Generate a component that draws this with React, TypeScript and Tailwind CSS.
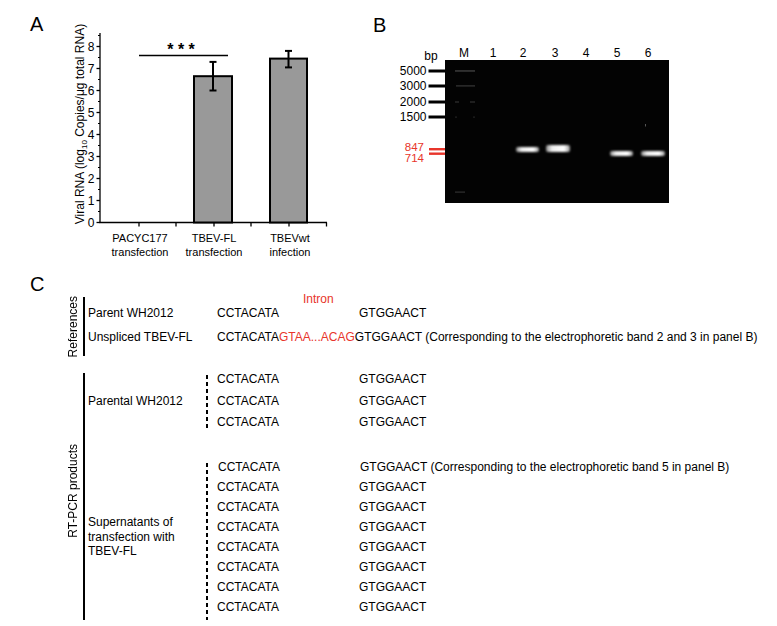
const Y0 = 222.5;
const UNIT = 22;
const yv = (v: number) => Y0 - v * UNIT;

const BarChart = () => {
  const majors = [0, 1, 2, 3, 4, 5, 6, 7, 8];
  const minors = [0.5, 1.5, 2.5, 3.5, 4.5, 5.5, 6.5, 7.5, 8.5];
  const bars = [
    { x: 194, w: 38, v: 6.65, lo: 6.0, hi: 7.3 },
    { x: 270, w: 37, v: 7.45, lo: 7.05, hi: 7.8 },
  ];
  const labels = [
    { x: 140, a: 'PACYC177', b: 'transfection' },
    { x: 214, a: 'TBEV-FL', b: 'transfection' },
    { x: 290, a: 'TBEVwt', b: 'infection' },
  ];

  return (
    <svg width="360" height="270" viewBox="0 0 360 270" className="shrink-0">
      <text x="30" y="31" fontSize="20">A</text>

      {/* y axis */}
      <line x1="100" y1="33" x2="100" y2={Y0} stroke="#000" strokeWidth="1.3" />
      {majors.map((m) => (
        <g key={m}>
          <line x1="96.5" y1={yv(m)} x2="100" y2={yv(m)} stroke="#000" strokeWidth="1.3" />
          <text x="94.5" y={yv(m) + 4.3} fontSize="12" textAnchor="end">
            {m}
          </text>
        </g>
      ))}
      {minors.map((m) => (
        <line key={m} x1="98" y1={yv(m)} x2="100" y2={yv(m)} stroke="#000" strokeWidth="1.1" />
      ))}

      {/* x axis */}
      <line x1="99.4" y1={Y0} x2="327" y2={Y0} stroke="#000" strokeWidth="1.3" />
      {[139, 176, 214, 251, 289, 326.5].map((t) => (
        <line key={t} x1={t} y1={Y0} x2={t} y2={Y0 + 4} stroke="#000" strokeWidth="1.3" />
      ))}

      {/* bars */}
      {bars.map((b) => (
        <g key={b.x}>
          <rect
            x={b.x}
            y={yv(b.v)}
            width={b.w}
            height={Y0 - yv(b.v)}
            fill="#999999"
            stroke="#000"
            strokeWidth="2"
          />
          <line x1={b.x + b.w / 2} y1={yv(b.hi)} x2={b.x + b.w / 2} y2={yv(b.lo)} stroke="#000" strokeWidth="2" />
          <line x1={b.x + b.w / 2 - 3.5} y1={yv(b.hi)} x2={b.x + b.w / 2 + 3.5} y2={yv(b.hi)} stroke="#000" strokeWidth="2" />
          <line x1={b.x + b.w / 2 - 3.5} y1={yv(b.lo)} x2={b.x + b.w / 2 + 3.5} y2={yv(b.lo)} stroke="#000" strokeWidth="2" />
        </g>
      ))}

      {/* significance */}
      <line x1="139" y1="55.5" x2="228" y2="55.5" stroke="#000" strokeWidth="1.5" />
      <text x="181" y="54.5" fontSize="16" fontWeight="bold" textAnchor="middle">
        * * *
      </text>

      {/* category labels */}
      {labels.map((l) => (
        <g key={l.a}>
          <text x={l.x} y="242" fontSize="11" textAnchor="middle">
            {l.a}
          </text>
          <text x={l.x} y="256" fontSize="11" textAnchor="middle">
            {l.b}
          </text>
        </g>
      ))}

      {/* y axis title */}
      <text transform="translate(84,124) rotate(-90)" fontSize="12" textAnchor="middle">
        Viral RNA (log
        <tspan fontSize="8" dy="3">
          10
        </tspan>
        <tspan dy="-3"> Copies/μg total RNA)</tspan>
      </text>
    </svg>
  );
};

const Gel = () => {
  const lanes = [
    { t: 'M', x: 464 },
    { t: '1', x: 493 },
    { t: '2', x: 523 },
    { t: '3', x: 555 },
    { t: '4', x: 586 },
    { t: '5', x: 617 },
    { t: '6', x: 648 },
  ];
  const markers = [
    { t: '5000', y: 71 },
    { t: '3000', y: 86 },
    { t: '2000', y: 102 },
    { t: '1500', y: 117 },
  ];
  const bands = [
    { x: 516, y: 147, w: 23, h: 5 },
    { x: 546, y: 145, w: 24, h: 7 },
    { x: 610, y: 151, w: 23, h: 5 },
    { x: 641, y: 151, w: 24, h: 5 },
  ];

  return (
    <svg width="417" height="270" viewBox="360 0 417 270" className="shrink-0">
      <defs>
        <linearGradient id="band" x1="0" y1="0" x2="1" y2="0">
          <stop offset="0" stopColor="#8a8a8a" />
          <stop offset="0.25" stopColor="#eeeeee" />
          <stop offset="0.75" stopColor="#ffffff" />
          <stop offset="1" stopColor="#9a9a9a" />
        </linearGradient>
        <filter id="soft" x="-20%" y="-60%" width="140%" height="220%">
          <feGaussianBlur stdDeviation="0.8" />
        </filter>
      </defs>

      <text x="373" y="32" fontSize="20">B</text>

      <rect x="445" y="60" width="224" height="143" fill="#030303" />

      {/* ladder */}
      <g fill="#5a5a5a" opacity="0.75">
        <rect x="455" y="70.3" width="20" height="1.3" />
        <rect x="456" y="85.3" width="19" height="1.2" opacity="0.8" />
        <rect x="455" y="101.4" width="4" height="1.2" opacity="0.7" />
        <rect x="470" y="101.4" width="5" height="1.2" opacity="0.7" />
        <rect x="455" y="116.5" width="2" height="1.2" opacity="0.5" />
        <rect x="473" y="116.5" width="2" height="1.2" opacity="0.5" />
        <rect x="455" y="191.5" width="10" height="1.2" opacity="0.7" />
      </g>
      <rect x="645" y="124" width="1" height="2.5" fill="#555" />

      {bands.map((b) => (
        <rect key={b.x} x={b.x} y={b.y} width={b.w} height={b.h} rx="2" fill="url(#band)" filter="url(#soft)" />
      ))}

      {lanes.map((l) => (
        <text key={l.t} x={l.x} y="56.5" fontSize="12" textAnchor="middle">
          {l.t}
        </text>
      ))}
      <text x="431" y="59.5" fontSize="12" textAnchor="middle">
        bp
      </text>

      {markers.map((m) => (
        <g key={m.t}>
          <text x="426.5" y={m.y + 4.4} fontSize="12" textAnchor="end">
            {m.t}
          </text>
          <rect x="428.5" y={m.y - 1.5} width="16.5" height="3" fill="#000" />
        </g>
      ))}

      <text x="424" y="150.5" fontSize="11.5" textAnchor="end" fill="#e8352b">
        847
      </text>
      <text x="424" y="162" fontSize="11.5" textAnchor="end" fill="#e8352b">
        714
      </text>
      <rect x="429" y="148" width="16" height="2.4" fill="#e8352b" />
      <rect x="429" y="152.5" width="16" height="2.4" fill="#e8352b" />
    </svg>
  );
};

const Seq = ({ note, shift }: { note?: string; shift?: boolean }) => (
  <div className={`flex whitespace-nowrap ${shift ? 'pl-[1px]' : ''}`}>
    <span className="w-[142px] shrink-0">CCTACATA</span>
    <span>
      GTGGAACT{note ? ` ${note}` : ''}
    </span>
  </div>
);

const Dashes = () => (
  <div className="w-[2px] bg-[repeating-linear-gradient(to_bottom,#000_0px,#000_4px,transparent_4px,transparent_7px)]" />
);

export default function App() {
  return (
    <div className="w-[777px] h-[626px] overflow-hidden bg-white text-black font-['Liberation_Sans',Arial,sans-serif]">
      <div className="flex h-[270px]">
        <BarChart />
        <Gel />
      </div>

      <div className="text-[12px]">
        <div className="pl-[30px] pt-[5px] text-[20px] leading-[18px]">C</div>

        {/* References */}
        <div className="flex ml-[66px] h-[63px]">
          <div className="flex mt-[4px] h-[59px]">
            <div className="w-[14px] flex items-center justify-center">
              <span className="[writing-mode:vertical-rl] rotate-180 leading-[14px] whitespace-nowrap">References</span>
            </div>
            <div className="ml-[3px] w-[2px] bg-black" />
          </div>
          <div className="ml-[3px] flex flex-col">
            <div className="leading-[13px] pl-[215px] text-[#e8352b]">Intron</div>
            <div className="flex leading-[14px]">
              <span className="w-[129px] shrink-0">Parent WH2012</span>
              <Seq />
            </div>
            <div className="flex leading-[14px] mt-[10px] whitespace-nowrap">
              <span className="w-[129px] shrink-0">Unspliced TBEV-FL</span>
              <span>
                CCTACATA<span className="text-[#e8352b]">GTAA...ACAG</span>GTGGAACT (Corresponding to the
                electrophoretic band 2 and 3 in panel B)
              </span>
            </div>
          </div>
        </div>

        {/* RT-PCR products */}
        <div className="flex ml-[66px] mt-[13px]">
          <div className="flex mt-[4px]">
            <div className="w-[14px] flex items-center justify-center pb-[12px]">
              <span className="[writing-mode:vertical-rl] rotate-180 leading-[14px] whitespace-nowrap">
                RT-PCR products
              </span>
            </div>
            <div className="ml-[3px] w-[2px] bg-black" />
          </div>

          <div className="ml-[3px] flex flex-col pb-[3px]">
            <div className="flex">
              <div className="w-[118px] shrink-0 flex items-center leading-[14px]">Parental WH2012</div>
              <div className="flex py-[6px] pb-[5px]">
                <Dashes />
              </div>
              <div className="ml-[9px] flex flex-col leading-[21.5px]">
                <Seq />
                <Seq />
                <Seq />
              </div>
            </div>

            <div className="flex mt-[23.5px]">
              <div className="w-[118px] shrink-0 flex items-center leading-[14.5px]">
                <span>
                  Supernatants of
                  <br />
                  transfection with
                  <br />
                  TBEV-FL
                </span>
              </div>
              <div className="flex pt-[6px] -mb-[3px]">
                <Dashes />
              </div>
              <div className="ml-[9px] flex flex-col leading-[20px]">
                <Seq shift note="(Corresponding to the electrophoretic band 5 in panel B)" />
                <Seq />
                <Seq />
                <Seq />
                <Seq />
                <Seq />
                <Seq />
                <Seq />
              </div>
            </div>
          </div>
        </div>
      </div>
    </div>
  );
}
